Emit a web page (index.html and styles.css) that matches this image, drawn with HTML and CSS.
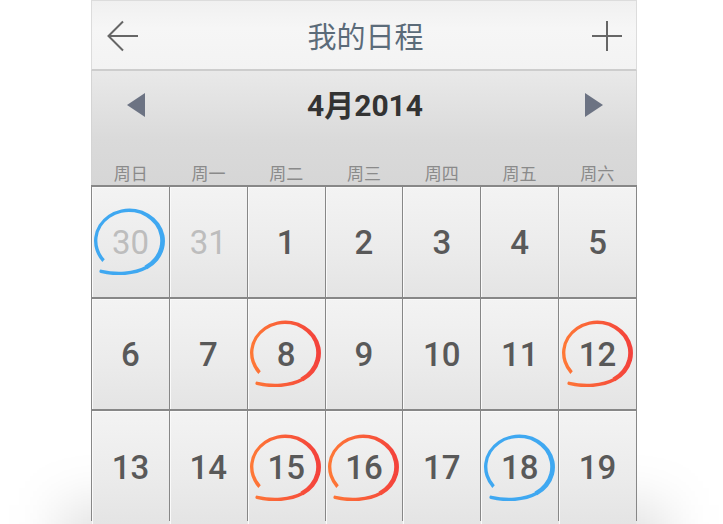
FILE: index.html
```html
<!DOCTYPE html>
<html lang="zh">
<head>
<meta charset="utf-8">
<title>我的日程</title>
<link rel="stylesheet" href="styles.css">
</head>
<body>
<div class="stage">
  <div class="phone">
    <header class="header">
      <svg class="icon-back" width="32" height="32" viewBox="0 0 32 32"><path d="M31 16H2M16 1.5L1.5 16L16 30.5" fill="none" stroke="#666" stroke-width="2"/></svg>
      <h1 class="title">我的日程</h1>
      <svg class="icon-plus" width="30" height="30" viewBox="0 0 30 30"><path d="M15 0V30M0 15H30" fill="none" stroke="#666" stroke-width="2"/></svg>
    </header>
    <section class="monthbar">
      <div class="nav">
        <svg width="18" height="24" viewBox="0 0 18 24"><polygon points="0,12 18,0 18,24" fill="#6c7383"/></svg>
        <div class="month">4月2014</div>
        <svg width="18" height="24" viewBox="0 0 18 24"><polygon points="18,12 0,0 0,24" fill="#6c7383"/></svg>
      </div>
      <div class="weekdays">
        <span>周日</span><span>周一</span><span>周二</span><span>周三</span><span>周四</span><span>周五</span><span>周六</span>
      </div>
    </section>
    <svg width="0" height="0" class="defs">
      <defs>
        <linearGradient id="red" gradientUnits="userSpaceOnUse" x1="0" y1="0" x2="74" y2="0">
          <stop offset="0" stop-color="#ff7b36"/>
          <stop offset="1" stop-color="#f33f3c"/>
        </linearGradient>
        <symbol id="ring" viewBox="0 0 74 66" preserveAspectRatio="none">
          <path stroke="none" d="M10.2 53.3A35 31.5 0 1 1 54.5 60.3L51.8 57A31 28 0 1 0 12.6 50.8Z"/>
          <path fill="none" stroke-width="3.4" stroke-linecap="round" d="M53.5 58.8C42 65 24 66 9 62.5"/>
        </symbol>
      </defs>
    </svg>
    <div class="grid">
      <div class="cell muted"><svg class="ring blue"><use href="#ring"/></svg><span>30</span></div>
      <div class="cell muted"><span>31</span></div>
      <div class="cell"><span>1</span></div>
      <div class="cell"><span>2</span></div>
      <div class="cell"><span>3</span></div>
      <div class="cell"><span>4</span></div>
      <div class="cell"><span>5</span></div>

      <div class="cell"><span>6</span></div>
      <div class="cell"><span>7</span></div>
      <div class="cell"><svg class="ring red"><use href="#ring"/></svg><span>8</span></div>
      <div class="cell"><span>9</span></div>
      <div class="cell"><span>10</span></div>
      <div class="cell"><span>11</span></div>
      <div class="cell"><svg class="ring red"><use href="#ring"/></svg><span>12</span></div>

      <div class="cell"><span>13</span></div>
      <div class="cell"><span>14</span></div>
      <div class="cell"><svg class="ring red"><use href="#ring"/></svg><span>15</span></div>
      <div class="cell"><svg class="ring red"><use href="#ring"/></svg><span>16</span></div>
      <div class="cell"><span>17</span></div>
      <div class="cell"><svg class="ring blue"><use href="#ring"/></svg><span>18</span></div>
      <div class="cell"><span>19</span></div>
    </div>
  </div>
</div>
</body>
</html>
```
FILE: styles.css
```css
* { box-sizing: border-box; }
html, body { margin: 0; padding: 0; background: #fff; }
.stage {
  position: relative;
  width: 723px;
  height: 524px;
  overflow: hidden;
  background: #fff;
}
.stage::before {
  content: "";
  position: absolute;
  left: 60px;
  width: 608px;
  top: 505px;
  height: 120px;
  background: rgba(0, 0, 0, 0.12);
  filter: blur(26px);
}
.phone {
  position: relative;
  z-index: 1;
  margin-left: 91px;
  width: 546px;
  height: 600px;
  background: #e8e8e8;
  font-family: Roboto, "Noto Sans CJK SC", sans-serif;
}
.header {
  height: 71px;
  display: flex;
  align-items: center;
  justify-content: space-between;
  padding: 0 14px 0 15px;
  background: linear-gradient(#f0f0f0, #f6f6f6 40%, #f3f3f3);
  border: 1px solid #dcdcdc;
  border-bottom: 2px solid #cdcdcd;
}
.icon-back { margin-top: 1px; }
.icon-plus { margin-top: 1px; }
.title {
  margin: 0;
  font-family: "Noto Sans CJK SC", sans-serif;
  font-size: 29px;
  font-weight: 400;
  color: #5b6b79;
  line-height: 1;
}
.monthbar {
  height: 114px;
  background: linear-gradient(#e9e9e9, #dadada 60%, #d6d6d6);
  border-left: 1px solid #d4d4d4;
  border-right: 1px solid #d4d4d4;
}
.nav {
  height: 67px;
  display: flex;
  align-items: center;
  justify-content: space-between;
  padding: 0 33px 0 35px;
}
.month {
  font-size: 30px;
  font-weight: 700;
  color: #333;
  line-height: 1;
  margin-top: 2px;
}
.weekdays {
  height: 47px;
  display: grid;
  grid-template-columns: repeat(7, 1fr);
  align-items: end;
  padding-bottom: 2px;
}
.weekdays span {
  text-align: center;
  font-family: "Noto Sans CJK SC", sans-serif;
  font-size: 17px;
  line-height: 20px;
  color: #8a8a8a;
}
.defs { position: absolute; }
.grid {
  display: grid;
  grid-template-columns: repeat(7, 1fr);
  grid-auto-rows: 110px;
  column-gap: 1px;
  row-gap: 2px;
  background: #878787;
  border-top: 2px solid #878787;
  border-left: 1px solid #878787;
  border-right: 1px solid #878787;
}
.cell {
  position: relative;
  display: flex;
  align-items: center;
  justify-content: center;
  background: linear-gradient(#f3f3f3, #ebebeb 60%, #e4e4e4);
  box-shadow: inset 1px 1px 0 #fafafa;
}
.grid .cell:nth-child(n+15) { height: 113px; }
.cell span {
  position: relative;
  font-size: 33px;
  font-weight: 500;
  color: #595959;
  line-height: 1;
}
.cell.muted span { color: #bdbdbd; font-weight: 400; }
.ring {
  position: absolute;
  left: 50%;
  top: 50%;
  width: 75px;
  height: 68px;
  margin-left: -38px;
  margin-top: -35px;
}
.ring.blue { fill: #3fa8f1; stroke: #3fa8f1; }
.ring.red { fill: url(#red); stroke: url(#red); }
```
